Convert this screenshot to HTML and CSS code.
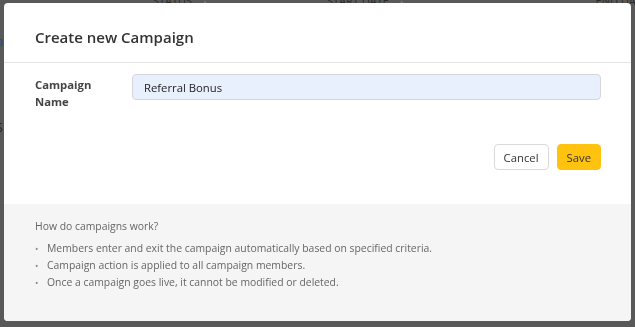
FILE: index.html
```html
<!DOCTYPE html>
<html lang="en">
<head>
    <meta charset="UTF-8">
    <meta name="viewport" content="width=device-width, initial-scale=1.0">
    <title>Campaigns</title>
    <link rel="stylesheet" href="styles.css">
</head>
<body>
    <div class="page">
        <div class="table-head">
            <span class="col col-status">STATUS <span class="sort">&#9650;</span></span>
            <span class="col col-start">START DATE <span class="sort">&#9650;</span></span>
            <span class="col col-end">END DATE</span>
        </div>
        <div class="row-link">a</div>
        <div class="row-icon">S</div>
    </div>

    <div class="overlay">
        <div class="modal">
            <div class="modal-header">
                <h2>Create new Campaign</h2>
            </div>
            <div class="modal-body">
                <div class="form-row">
                    <label for="name">Campaign Name</label>
                    <input type="text" id="name" value="Referral Bonus">
                </div>
                <div class="actions">
                    <button class="btn btn-cancel">Cancel</button>
                    <button class="btn btn-save">Save</button>
                </div>
            </div>
            <div class="modal-footer">
                <p>How do campaigns work?</p>
                <ul>
                    <li>Members enter and exit the campaign automatically based on specified criteria.</li>
                    <li>Campaign action is applied to all campaign members.</li>
                    <li>Once a campaign goes live, it cannot be modified or deleted.</li>
                </ul>
            </div>
        </div>
    </div>
</body>
</html>
```

FILE: styles.css
```css
body {
    font-family: "Open Sans", "Noto Sans", sans-serif;
    background-color: #595959;
    margin: 0;
    height: 327px;
    overflow: hidden;
}
.page {
    height: 100%;
}
.table-head {
    display: flex;
    height: 5px;
    overflow: hidden;
    font-size: 11px;
    line-height: 12px;
    color: #2b2b2b;
}
.col {
    margin-top: -5px;
    white-space: nowrap;
}
.col-status {
    margin-left: 153px;
}
.col-start {
    margin-left: 118px;
}
.col-end {
    margin-left: 190px;
}
.sort {
    font-size: 8px;
    color: #777;
    margin-left: 6px;
}
.row-link {
    margin-top: 27px;
    margin-left: -4px;
    font-size: 13px;
    color: #1f4f86;
}
.row-icon {
    margin-top: 69px;
    margin-left: -4px;
    font-size: 12px;
    color: #222;
}
.overlay {
    position: fixed;
    top: 0;
    left: 0;
    right: 0;
    bottom: 0;
}
.modal {
    position: absolute;
    top: 3px;
    left: 4px;
    width: 627px;
    height: 318px;
    background: #fff;
    border-radius: 4px;
    overflow: hidden;
    display: flex;
    flex-direction: column;
}
.modal-header {
    padding: 23px 30px 13px 31px;
    border-bottom: 1px solid #e3e3e3;
}
.modal-header h2 {
    margin: 0;
    font-size: 15px;
    line-height: 23px;
    font-weight: 600;
    color: #333;
}
.modal-body {
    padding: 11px 30px 0 31px;
    height: 130px;
}
.form-row {
    display: flex;
    align-items: flex-start;
}
.form-row label {
    width: 77px;
    margin-right: 20px;
    flex-shrink: 0;
    padding-top: 2px;
    font-size: 11.3px;
    line-height: 17px;
    font-weight: 700;
    color: #444;
}
.form-row input {
    flex: 1;
    height: 26px;
    box-sizing: border-box;
    padding: 0 11px;
    border: 1px solid #d4d6dc;
    border-radius: 4px;
    background-color: #e8f0fe;
    font-family: inherit;
    font-size: 11.3px;
    color: #222;
}
.actions {
    display: flex;
    justify-content: flex-end;
    gap: 8px;
    margin-top: 34px;
}
.btn {
    height: 26px;
    padding: 0 9px;
    border-radius: 4px;
    font-family: inherit;
    font-size: 11.3px;
    color: #333;
    cursor: pointer;
}
.btn-cancel {
    background: #fff;
    border: 1px solid #d9d9de;
}
.btn-save {
    background: #ffc20e;
    border: 1px solid #ffc20e;
}
.modal-footer {
    flex: 1;
    background: #f5f5f5;
    padding: 14px 30px 0 31px;
    font-size: 10.4px;
    color: #666;
}
.modal-footer p {
    margin: 0 0 6px;
    line-height: 16px;
}
.modal-footer ul {
    margin: 0;
    padding: 0;
    list-style: none;
}
.modal-footer li {
    line-height: 17px;
    padding-left: 12px;
    position: relative;
}
.modal-footer li::before {
    content: "\2022";
    position: absolute;
    left: 0;
    font-size: 9px;
    color: #888;
}
```
